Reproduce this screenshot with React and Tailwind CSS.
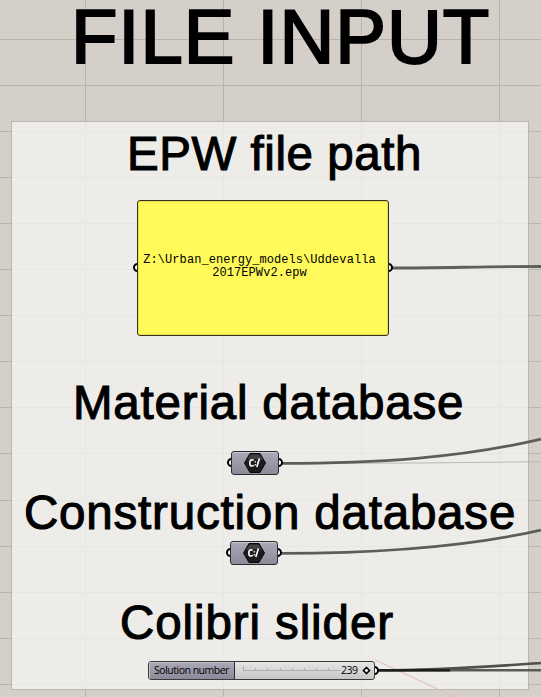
const COLUMNS = [85, 223, 361, 499];
const ROWS = [39, 85, 131, 177, 223, 269, 315, 361, 407, 453, 500, 546, 592, 638, 684];

function Grid() {
  return (
    <svg className="absolute inset-0" width="541" height="697" shapeRendering="crispEdges">
      {COLUMNS.map((x) => (
        <rect key={x} x={x} y="0" width="1" height="697" fill="#b8b4ac" />
      ))}
      {ROWS.map((y) => (
        <rect key={y} x="0" y={y} width="541" height="1" fill="#b8b4ac" />
      ))}
    </svg>
  );
}

function Wires() {
  return (
    <svg className="absolute inset-0" width="541" height="697" fill="none">
      <path d="M391 268 C440 268 490 266.5 541 266.5" stroke="#5f5f5d" strokeWidth="2.8" />
      <path d="M281 463.5 L420 463 L541 461.7" stroke="#b9b9b5" strokeWidth="1" />
      <path d="M281 463.3 C375 463.3 462 458 541 439" stroke="#5c5c5a" strokeWidth="2.8" />
      <path d="M281 553.3 C375 553.3 462 548 541 530" stroke="#5c5c5a" strokeWidth="2.8" />
      <path d="M375 660 L455 697" stroke="#e3b9bb" strokeWidth="1" />
      <path d="M378 670.3 C440 670.3 490 666.5 541 663" stroke="#50504e" strokeWidth="2.6" />
      <path d="M378 670.3 H541" stroke="#5a5a58" strokeWidth="2.6" />
      <path d="M378 670.3 H450" stroke="#1e1e1e" strokeWidth="2.6" />
    </svg>
  );
}

function Heading({ className, children }) {
  return (
    <div className={`absolute whitespace-nowrap font-['Liberation_Sans',Arial,sans-serif] text-black ${className}`}>
      {children}
    </div>
  );
}

function Grip({ className }) {
  return <span className={`absolute size-[9px] rounded-full border-2 border-black bg-white ${className}`} />;
}

function PathNode({ className }) {
  return (
    <div className={`absolute h-[24px] w-[48px] ${className}`}>
      <Grip className="top-[7px] -left-[4px]" />
      <Grip className="top-[7px] -right-[4px]" />
      <div className="relative flex h-full items-center justify-center rounded-[3px] border border-[#2b2b2d] bg-linear-to-b from-[#aaa9b8] to-[#8b8a99] shadow-[inset_0_1px_0_#c9c8d2]">
        <svg width="22" height="20" viewBox="0 0 22 20">
          <path d="M6 .5H16L21.5 10L16 19.5H6L.5 10Z" fill="#1c1c1c" stroke="#0a0a0a" />
          <path d="M6.5 1.5H15.5L19 7Q11 5 3 7Z" fill="#404040" />
          <path d="M9.6 7.6Q9 6.8 8 6.8Q5.8 6.8 5.8 9.9Q5.8 13 8 13Q9.2 13 9.6 12" fill="none" stroke="#f0f0f0" strokeWidth="1.7" />
          <path d="M15.4 5.6L12.8 14" fill="none" stroke="#fff" strokeWidth="1.6" />
          <path d="M10.6 8h1.5v1.5h-1.5zM10.6 11h1.5v1.5h-1.5z" fill="#ddd" />
        </svg>
      </div>
    </div>
  );
}

function SliderNode() {
  return (
    <div className="absolute top-[661px] left-[148px] h-[19px] w-[227px]">
      <Grip className="top-[5px] -right-[4px]" />
      <div className="relative flex h-full overflow-hidden rounded-[3px] border border-[#3a3a3a] bg-linear-to-b from-[#e6e6e6] to-[#c6c6c6] font-['Open_Sans',sans-serif] text-[10.5px] tracking-[-0.5px] text-black">
        <div className="flex w-[86px] shrink-0 items-center justify-center border-r border-[#2b2b2d] bg-linear-to-b from-[#aaa9b8] to-[#8b8a99] leading-[15px] whitespace-nowrap shadow-[inset_1px_1px_0_#c0bfca]">
          Solution number
        </div>
        <div className="flex flex-1 items-center pr-[5px]">
          <svg className="ml-[8px] shrink-0" width="98" height="17" stroke="#adadad" shapeRendering="crispEdges">
            <path d="M0 8.5H97M.5 4V9M12.5 6V9M24.5 6V9M37.5 6V9M49.5 6V9M61.5 6V9M73.5 6V9M85.5 6V9" />
          </svg>
          <span className="ml-auto leading-[15px]">239</span>
          <svg className="ml-[4px] shrink-0" width="9" height="9">
            <path d="M4.5 1.5L7.5 4.5L4.5 7.5L1.5 4.5Z" fill="#fff" stroke="#000" strokeWidth="1.6" />
          </svg>
        </div>
      </div>
    </div>
  );
}

export default function App() {
  return (
    <div className="relative h-[697px] w-[541px] overflow-hidden bg-[#d4cfc8]">
      <Grid />
      <div className="absolute top-[121px] left-[11px] h-[569px] w-[518px] border border-[#b9b7b0] bg-[#f2f2f0]/80" />
      <Wires />

      <Heading className="top-0 left-[71px] text-[76px] leading-[74px] tracking-[0.95px] [-webkit-text-stroke:2.1px_#000]">FILE INPUT</Heading>
      <Heading className="top-[130px] left-[127px] text-[47.5px] leading-[48px] tracking-[0.55px] [-webkit-text-stroke:1.1px_#000]">EPW file path</Heading>
      <Heading className="top-[379px] left-[73px] text-[47.5px] leading-[48px] tracking-[0.8px] [-webkit-text-stroke:1.1px_#000]">Material database</Heading>
      <Heading className="top-[489px] left-[24px] text-[47.5px] leading-[48px] tracking-[0.8px] [-webkit-text-stroke:1.1px_#000]">Construction database</Heading>
      <Heading className="top-[599px] left-[120px] text-[47.5px] leading-[48px] tracking-[0.9px] [-webkit-text-stroke:1.1px_#000]">Colibri slider</Heading>

      <div className="absolute top-[200px] left-[137px] h-[136px] w-[252px]">
        <Grip className="top-[63px] -left-[4px]" />
        <Grip className="top-[63px] -right-[4px]" />
        <div className="relative flex h-full flex-col items-center justify-center rounded-[3px] border border-[#33331c] bg-[#fffa5a] pr-[7px] pb-[2px] font-['Courier_New','Liberation_Mono',monospace] text-[12px] leading-[13.5px] tracking-[0.06px] whitespace-nowrap text-black shadow-[inset_0_0_0_1px_#e6e152]">
          <span>Z:\Urban_energy_models\Uddevalla</span>
          <span>2017EPWv2.epw</span>
        </div>
      </div>

      <PathNode className="top-[451px] left-[231px]" />
      <PathNode className="top-[541px] left-[230px]" />
      <SliderNode />
    </div>
  );
}
